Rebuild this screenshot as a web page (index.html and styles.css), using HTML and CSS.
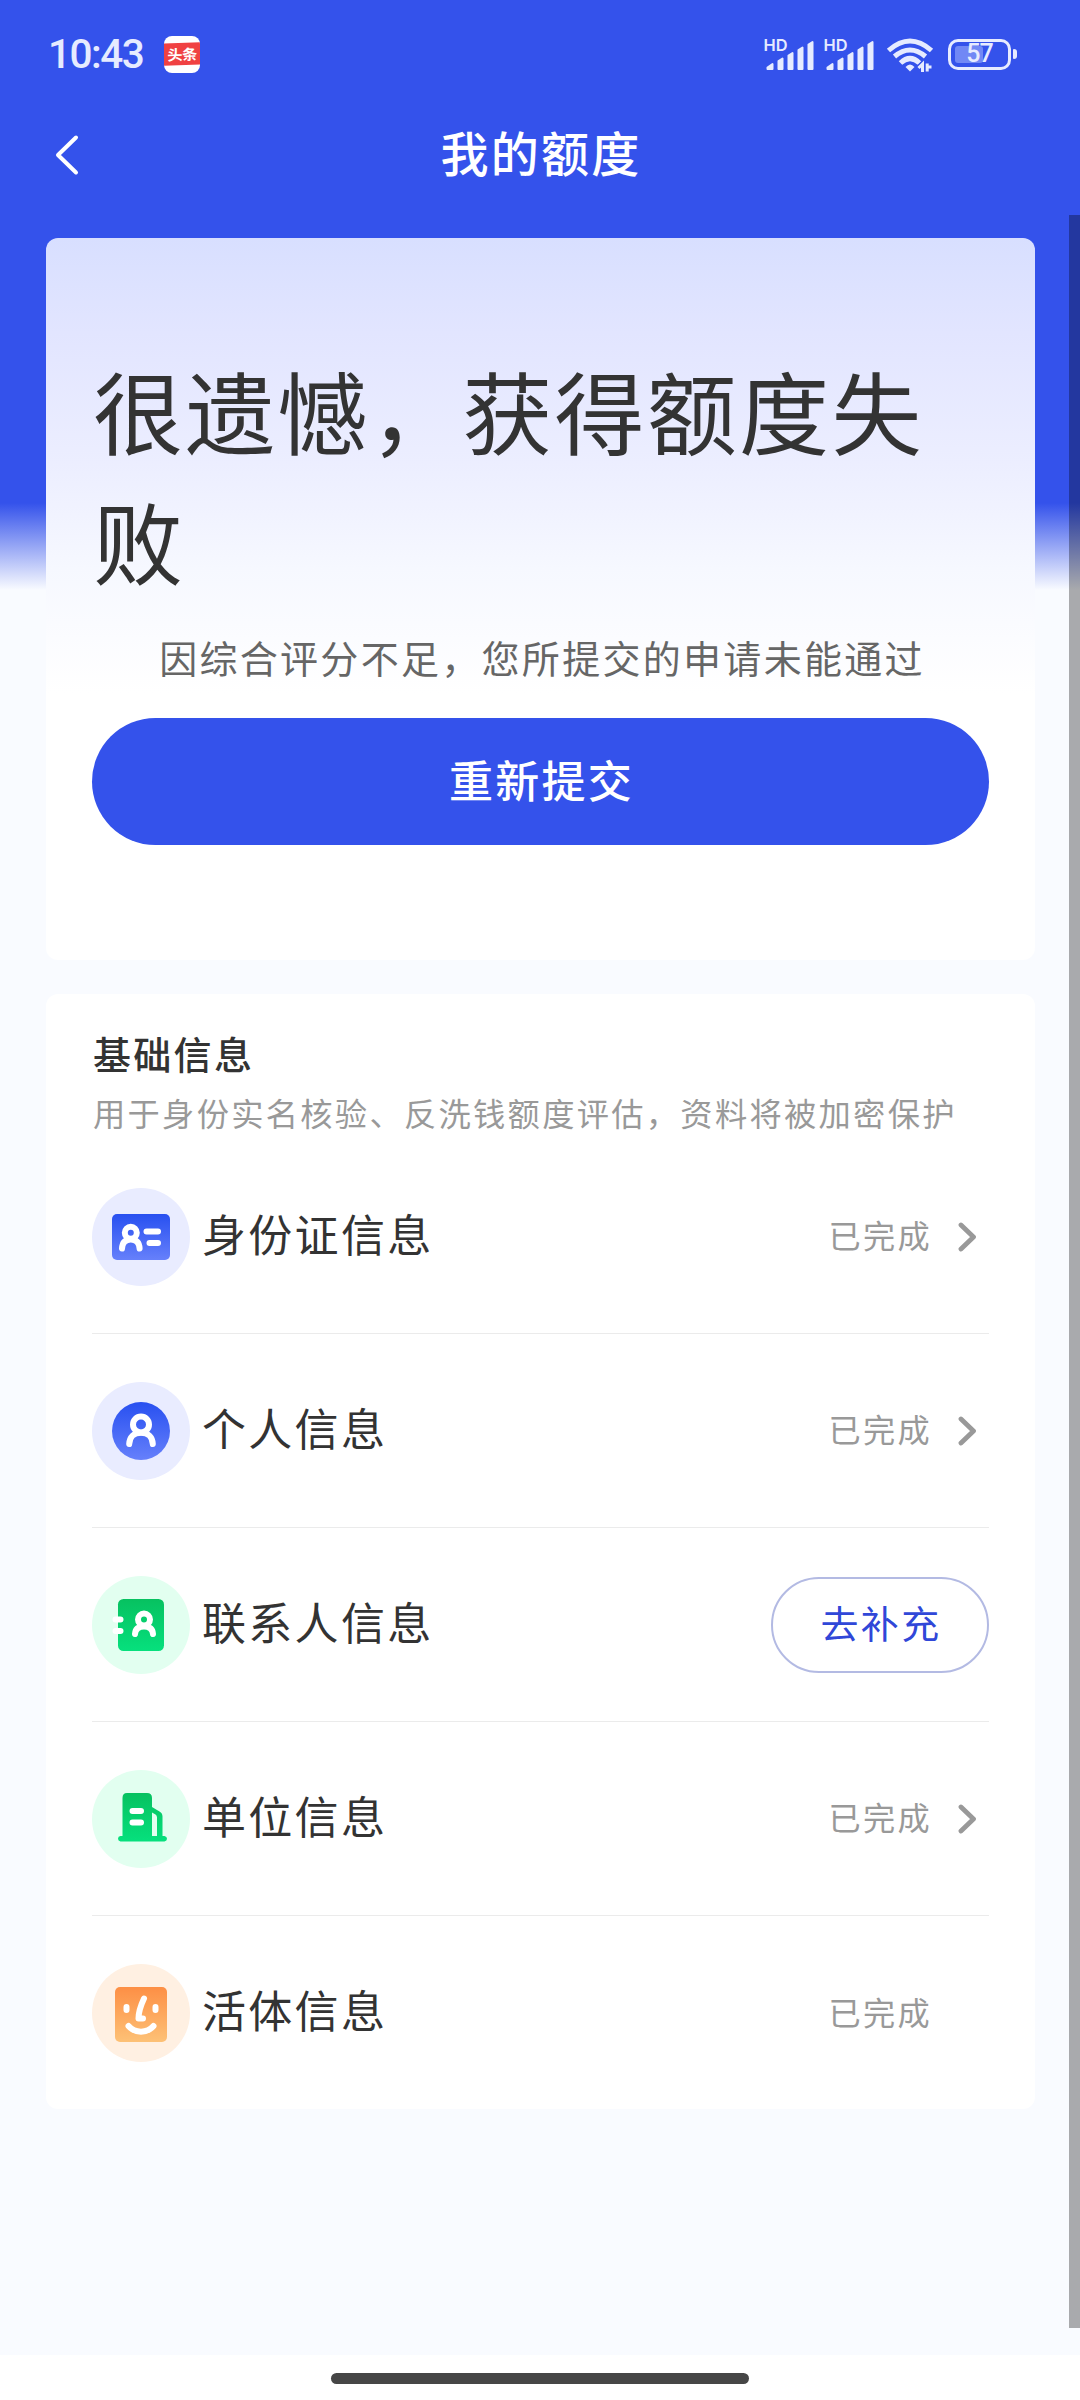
FILE: index.html
```html
<!DOCTYPE html>
<html lang="zh-CN">
<head>
<meta charset="utf-8">
<title>我的额度</title>
<link rel="stylesheet" href="styles.css">
</head>
<body>
<div class="screen">
  <header class="status-bar">
    <span class="time">10:43</span>
    <span class="app-badge"><span class="app-band">头条</span></span>
    <svg class="signal" width="52" height="36" viewBox="0 0 52 36">
      <text x="-0.500" y="15" textLength="24" lengthAdjust="spacingAndGlyphs">HD</text>
      <path d="M3.500 33V31.500L8.500 28V33ZM14.500 33V25L18.500 22.500V33ZM24.500 33V19.500L28.500 17V33ZM34.500 33V14L38.500 11.500V33ZM44.500 33V8.500L48.500 6V33Z"/>
    </svg>
    <svg class="signal second" width="52" height="36" viewBox="0 0 52 36">
      <text x="-0.500" y="15" textLength="24" lengthAdjust="spacingAndGlyphs">HD</text>
      <path d="M3.500 33V31.500L8.500 28V33ZM14.500 33V25L18.500 22.500V33ZM24.500 33V19.500L28.500 17V33ZM34.500 33V14L38.500 11.500V33ZM44.500 33V8.500L48.500 6V33Z"/>
    </svg>
    <svg class="wifi" width="48" height="36" viewBox="0 0 48 36">
      <g fill="none" stroke="#e6ebff" stroke-width="5">
        <path d="M2.500 14.500Q24 -4.500 45.500 14.500"/>
        <path d="M8.500 20.500Q24 7.500 39.500 20.500"/>
        <path d="M14.500 27Q24 18 33.500 27"/>
      </g>
      <path d="M19.500 31Q24 26 28.500 31L24 35.500Z" fill="#e6ebff"/>
      <path d="M32 32L36 28.500V36M45.500 31L41.500 35.500V28.500" fill="none" stroke="#3452eb" stroke-width="5"/>
      <path d="M32.500 32L36.500 28V36M45.500 31H41.200V35.500V27.500" fill="none" stroke="#e6ebff" stroke-width="3"/>
    </svg>
    <span class="battery"><span class="battery-fill"></span><span class="battery-text">57</span></span>
    <span class="battery-cap"></span>
  </header>

  <nav class="nav">
    <svg class="back" width="26" height="42" viewBox="0 0 26 42"><path d="M22 3.500L4 21L22 38.500"/></svg>
    <h1>我的额度</h1>
  </nav>

  <main class="content">
    <section class="card result">
      <h2>很遗憾，获得额度失败</h2>
      <p class="reason">因综合评分不足，您所提交的申请未能通过</p>
      <button class="submit">重新提交</button>
    </section>

    <section class="card info">
      <h3>基础信息</h3>
      <p class="note">用于身份实名核验、反洗钱额度评估，资料将被加密保护</p>
      <ul class="rows">
        <li class="row">
          <svg class="icon" width="98" height="98" viewBox="0 0 98 98">
            <defs>
              <linearGradient id="blue" x1="0" y1="0" x2="0" y2="1"><stop offset="0" stop-color="#2850f0"/><stop offset="1" stop-color="#6680fb"/></linearGradient>
              <linearGradient id="green" x1="0" y1="0" x2="0" y2="1"><stop offset="0" stop-color="#07c160"/><stop offset="1" stop-color="#06e07d"/></linearGradient>
              <linearGradient id="orange" x1="0" y1="0" x2="0" y2="1"><stop offset="0" stop-color="#fd8f45"/><stop offset="1" stop-color="#fdc176"/></linearGradient>
            </defs>
            <circle cx="49" cy="49" r="49" fill="#e9ecff"/>
            <rect x="20" y="26" width="58" height="46" rx="5" fill="url(#blue)"/>
            <g class="glyph"><circle cx="38.800" cy="44.800" r="6"/><path d="M30 60.500C30.300 55 32.500 51.500 38.800 51.500S47.300 55 47.600 60.500M54.500 43.500H66M57.500 55H66"/></g>
          </svg>
          <span class="label">身份证信息</span><span class="state">已完成</span>
          <svg class="chevron" width="20" height="32" viewBox="0 0 20 32"><path d="M3 4L15.500 16L3 28"/></svg>
        </li>
        <li class="row">
          <svg class="icon" width="98" height="98" viewBox="0 0 98 98">
            <circle cx="49" cy="49" r="49" fill="#e9ecff"/>
            <circle cx="49" cy="49" r="29" fill="url(#blue)"/>
            <g class="glyph"><circle cx="49" cy="42.500" r="8"/><path d="M37.200 62C37.500 55 41.500 50.800 49 50.800S60.500 55 60.800 62"/></g>
          </svg>
          <span class="label">个人信息</span><span class="state">已完成</span>
          <svg class="chevron" width="20" height="32" viewBox="0 0 20 32"><path d="M3 4L15.500 16L3 28"/></svg>
        </li>
        <li class="row">
          <svg class="icon" width="98" height="98" viewBox="0 0 98 98">
            <circle cx="49" cy="49" r="49" fill="#e2fff0"/>
            <rect x="26" y="23" width="46" height="52" rx="5.500" fill="url(#green)"/>
            <g class="glyph"><circle cx="52" cy="43.500" r="6"/><path d="M43 58C43.300 53.500 45.500 50.500 52 50.500S60.700 53.500 61 58M23.500 43.500H28.500M23.500 55H28.500"/></g>
          </svg>
          <span class="label">联系人信息</span>
          <button class="fill-in">去补充</button>
        </li>
        <li class="row">
          <svg class="icon" width="98" height="98" viewBox="0 0 98 98">
            <circle cx="49" cy="49" r="49" fill="#e2fff0"/>
            <path fill="url(#green)" fill-rule="evenodd" d="M35 23H55Q60 23 60 28V37L67.500 41.500Q70.500 43.200 70.500 46.500V66H72.500Q75 66.500 75 68.700T72.500 71.500H28.500Q26 71 26 68.700T28.500 66H30.500V28Q30.500 23 35 23ZM60 42.500V66H65V47.500Q65 45.500 63.500 44.500Z"/>
            <path class="glyph" d="M40.500 41H49M40.500 52.500H49"/>
          </svg>
          <span class="label">单位信息</span><span class="state">已完成</span>
          <svg class="chevron" width="20" height="32" viewBox="0 0 20 32"><path d="M3 4L15.500 16L3 28"/></svg>
        </li>
        <li class="row">
          <svg class="icon" width="98" height="98" viewBox="0 0 98 98">
            <circle cx="49" cy="49" r="49" fill="#fff0e2"/>
            <rect x="23" y="23" width="52" height="55" rx="5" fill="url(#orange)"/>
            <path class="glyph" d="M34.500 43V46M63.500 43V46M52 34.500C48 43 46.500 49 46.500 54.500H51M36.500 62C43 69.500 55 69.500 61.500 62"/>
          </svg>
          <span class="label">活体信息</span><span class="state">已完成</span>
          <span class="chevron-space"></span>
        </li>
      </ul>
    </section>
  </main>

  <footer class="home-area"><span class="home-pill"></span></footer>
  <div class="scrollbar"></div>
</div>
</body>
</html>
```
FILE: styles.css
```css
* { box-sizing: border-box; margin: 0; padding: 0; }

body {
  width: 1080px;
  font-family: "Noto Sans CJK SC", sans-serif;
  letter-spacing: 2.3px;
  color: #333;
}

.screen {
  position: relative;
  display: flex;
  flex-direction: column;
  height: 2400px;
  overflow: hidden;
  background: linear-gradient(#3452eb 0, #3452eb 503px, #f9fbff 590px);
}

.status-bar {
  display: flex;
  align-items: center;
  height: 108px;
  padding: 0 63px 0 48px;
  color: #e6ebff;
}

.time {
  width: 116px;
  font: 500 40.500px/48px Roboto, sans-serif;
  letter-spacing: -1.500px;
}

.app-badge {
  display: flex;
  flex-direction: column;
  justify-content: center;
  width: 36px;
  height: 37px;
  margin-right: auto;
  overflow: hidden;
  border-radius: 8px;
  background: #fff;
}

.app-band {
  height: 22px;
  background: #f04142;
  color: #fff;
  font-size: 14.500px;
  font-weight: 700;
  line-height: 21px;
  letter-spacing: -0.500px;
  text-align: center;
  transform: rotate(-2deg) scaleX(1.05);
}

.signal { margin-right: 8px; fill: #e6ebff; overflow: visible; }
.signal path { stroke: #e6ebff; stroke-width: 2; stroke-linejoin: round; }
.signal text { font: 600 16.500px Inter, sans-serif; letter-spacing: 0; }
.signal.second { margin-right: 10px; }
.wifi { margin-right: 14px; }

.battery {
  position: relative;
  display: flex;
  align-items: center;
  justify-content: center;
  width: 63px;
  height: 31px;
  border: 3px solid #e6ebff;
  border-radius: 10px;
}

.battery-fill {
  position: absolute;
  left: 4px;
  top: 4px;
  width: 28px;
  height: 17px;
  border-radius: 3px;
  background: #7188f5;
}

.battery-text {
  position: relative;
  font: 500 25px/24px Roboto, sans-serif;
  letter-spacing: -1px;
}

.battery-cap {
  width: 4px;
  height: 10px;
  margin-left: 2px;
  border-radius: 1px 3px 3px 1px;
  background: #e6ebff;
}

.nav {
  display: grid;
  grid-template-columns: 102px 1fr 102px;
  align-items: center;
  height: 94px;
}

.back { margin-left: 54px; }
.back path { fill: none; stroke: #fff; stroke-width: 4; stroke-linecap: round; stroke-linejoin: round; }

.nav h1 {
  padding: 0 0 9px 2px;
  color: #fff;
  font-size: 48px;
  font-weight: 500;
  line-height: 70px;
  text-align: center;
}

.content {
  display: flex;
  flex: 1;
  flex-direction: column;
  gap: 34px;
  padding: 36px 45px 0 46px;
}

.card { padding: 0 46px; border-radius: 12px; background: #fff; }

.result {
  height: 722px;
  padding-top: 106px;
  background: linear-gradient(#d8dfff 0, #e2e5ff 95px, #eceeff 225px, #f6f8ff 330px, #fff 455px);
}

.result h2 {
  padding-left: 1px;
  font-size: 90px;
  font-weight: 400;
  line-height: 130px;
}

.reason {
  margin: 24px 0 33px;
  padding-left: 3px;
  color: #666;
  font-size: 38px;
  line-height: 57px;
  text-align: center;
}

.submit {
  width: 100%;
  height: 127px;
  padding: 0 0 6px 2px;
  border: 0;
  border-radius: 64px;
  background: #3452eb;
  color: #fff;
  font: 500 44px/64px "Noto Sans CJK SC", sans-serif;
  letter-spacing: 2.300px;
}

.info { height: 1115px; padding-top: 29px; }
.info h3 { padding-left: 1px; font-size: 38px; font-weight: 500; line-height: 60px; }
.note { height: 57px; padding-left: 1px; color: #999; font-size: 32.250px; line-height: 59px; white-space: nowrap; }
.rows { list-style: none; }

.row {
  display: flex;
  align-items: center;
  height: 194px;
  border-bottom: 1px solid #ebebeb;
}

.row:last-child { border: 0; }
.icon { margin-right: 12px; }
.glyph { fill: none; stroke: #fff; stroke-width: 6; stroke-linecap: round; stroke-linejoin: round; }
.label { margin-right: auto; padding-bottom: 8px; font-size: 44px; line-height: 64px; }
.state { margin-right: 26px; padding-bottom: 5px; color: #999; font-size: 32.200px; line-height: 48px; }
.chevron { margin-right: 11px; }
.chevron path { fill: none; stroke: #999; stroke-width: 4.800; stroke-linecap: round; stroke-linejoin: round; }
.chevron-space { width: 31px; }

.fill-in {
  width: 218px;
  height: 96px;
  padding: 0 0 6px 2px;
  border: 2px solid #b3bae3;
  border-radius: 48px;
  background: #fff;
  color: #3047d8;
  font: 400 38px/56px "Noto Sans CJK SC", sans-serif;
  letter-spacing: 2.300px;
}

.home-area {
  display: flex;
  justify-content: center;
  height: 45px;
  padding-top: 18px;
  background: #fff;
}

.home-pill { width: 418px; height: 11px; border-radius: 6px; background: #464646; }

.scrollbar {
  position: absolute;
  top: 215px;
  right: 0;
  width: 11px;
  height: 2113px;
  background: rgba(0, 0, 0, 0.320);
}
```
